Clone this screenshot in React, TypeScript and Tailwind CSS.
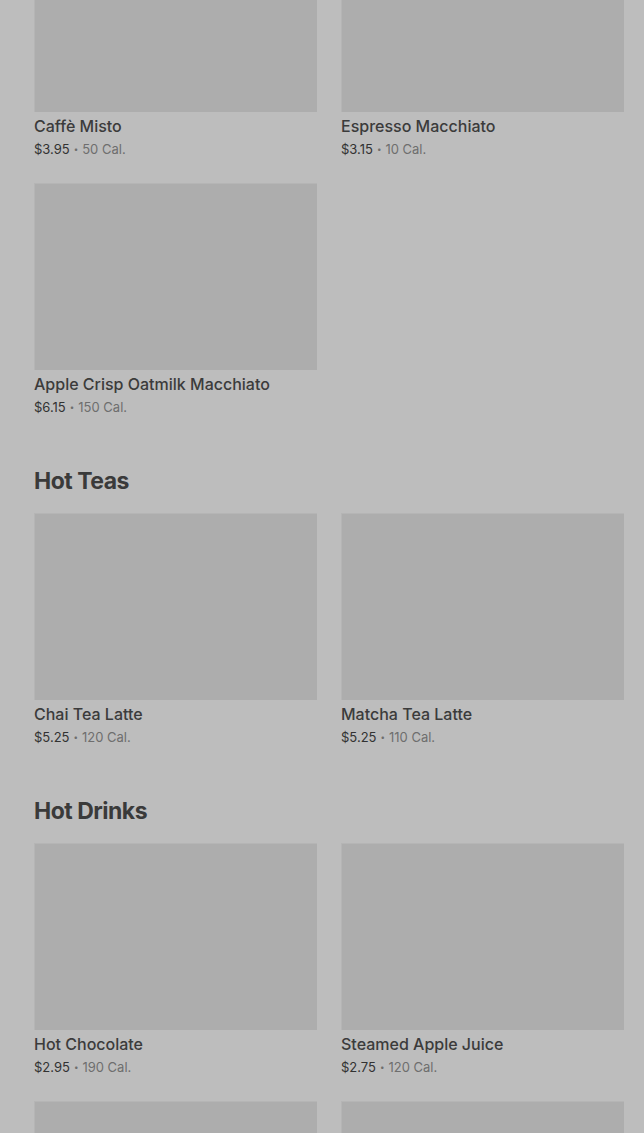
import React from "react";

type Item = { name?: string; price?: string; cal?: string };

const sections: { title?: string; items: Item[] }[] = [
  {
    items: [
      { name: "Caffè Misto", price: "$3.95", cal: "50 Cal." },
      { name: "Espresso Macchiato", price: "$3.15", cal: "10 Cal." },
      { name: "Apple Crisp Oatmilk Macchiato", price: "$6.15", cal: "150 Cal." },
    ],
  },
  {
    title: "Hot Teas",
    items: [
      { name: "Chai Tea Latte", price: "$5.25", cal: "120 Cal." },
      { name: "Matcha Tea Latte", price: "$5.25", cal: "110 Cal." },
    ],
  },
  {
    title: "Hot Drinks",
    items: [
      { name: "Hot Chocolate", price: "$2.95", cal: "190 Cal." },
      { name: "Steamed Apple Juice", price: "$2.75", cal: "120 Cal." },
      {},
      {},
    ],
  },
];

function MenuCard({ item }: { item: Item }) {
  return (
    <div className="flex flex-col">
      <div className="h-[187px] w-full border-t border-l border-[#b5b5b5] bg-[#adadad]" />
      {item.name && (
        <>
          <div className="mt-[2px] text-[16px] font-medium leading-6 text-[#3b3b3b]">
            {item.name}
          </div>
          <div className="mt-[1px] flex items-center text-[13px] leading-5 text-[#323232]">
            <span>{item.price}</span>
            <span className="mx-[4px] text-[8px] text-[#6e6e6e]">•</span>
            <span className="text-[#6e6e6e]">{item.cal}</span>
          </div>
        </>
      )}
    </div>
  );
}

export default function App() {
  return (
    <main
      className="h-[1133px] w-full overflow-hidden bg-[#bdbdbd] pl-[34px] pr-[20px]"
      style={{ fontFamily: "Inter, 'Noto Sans', sans-serif" }}
    >
      <div className="-mt-[75px] flex flex-col gap-[48px]">
        {sections.map((section, i) => (
          <section key={i}>
            {section.title && (
              <h2 className="mb-[16px] text-[23px] font-bold leading-8 tracking-[-0.5px] text-[#3a3a3a]">
                {section.title}
              </h2>
            )}
            <div className="grid grid-cols-2 gap-x-6 gap-y-6">
              {section.items.map((item, j) => (
                <MenuCard key={j} item={item} />
              ))}
            </div>
          </section>
        ))}
      </div>
    </main>
  );
}
